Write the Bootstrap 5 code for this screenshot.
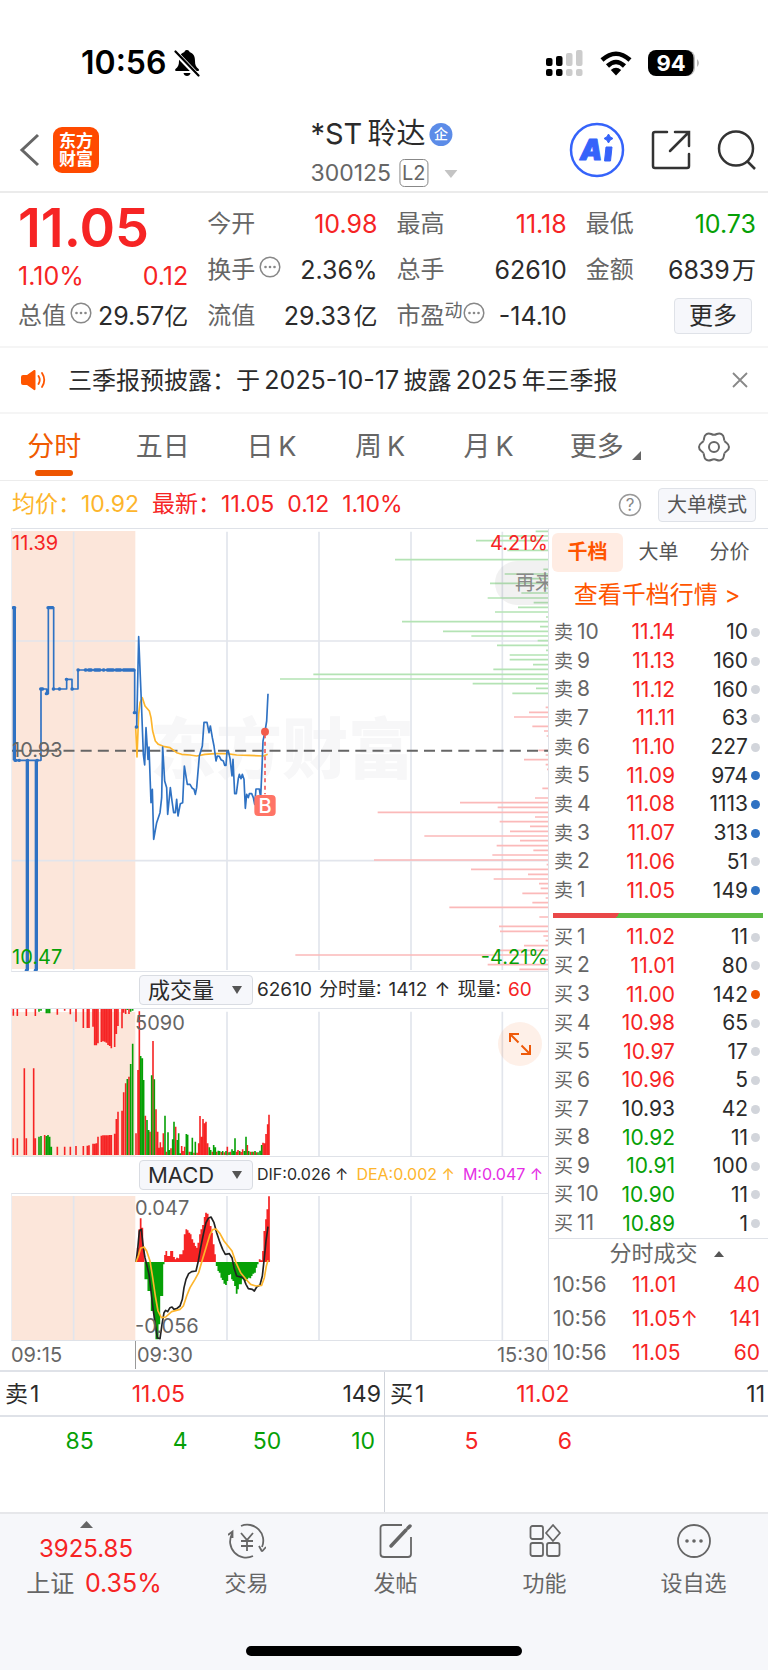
<!DOCTYPE html>
<html lang="zh-CN">
<head>
<meta charset="utf-8">
<meta name="viewport" content="width=device-width, initial-scale=1">
<title>*ST聆达 300125</title>
<link href="https://cdn.jsdelivr.net/npm/bootstrap@5.3.0/dist/css/bootstrap.min.css" rel="stylesheet">
<style>
:root{--up:#f62424;--down:#06a006;--ink:#2b2b2b;--dim:#666;--line:#dfe2e8;--brand:#f05a00;--avg:#fdb52c}
body{font-family:Inter,"Noto Sans CJK SC",sans-serif;color:var(--ink);background:#fff;font-size:24px;line-height:1.2}
svg{display:block}
.up{color:var(--up)}.down{color:var(--down)}.dim{color:var(--dim)}.avg{color:var(--avg)}
.status{padding:26px 68px 0 81px;height:100px;font-size:32px;font-weight:600;color:#000}
.nav-top{height:93px;border-bottom:2px solid #ebebeb;padding:8px 11px 0 18px}
.logo{width:46px;height:46px;border-radius:9px;background:#ff4a00;color:#fff;font-size:17px;line-height:18px;font-weight:700;text-align:center;padding-top:5px;margin-left:13px}
.title-block{padding-top:4px}
.stock-name{font-size:29px;line-height:36px;margin-bottom:7px}
.stock-code{font-size:23px;line-height:28px}
.ent{width:23px;height:23px;border-radius:50%;background:#5c8ce8;color:#fff;font-size:14px;line-height:22px;text-align:center;font-weight:500}
.lvl{border:1px solid #888;border-radius:5px;font-size:20px;line-height:26px;padding:0 2px}
.plain{border:0;background:none;padding:0;color:inherit}
.actions{gap:26px}
.quote{padding:8px 12px 7px 18px;border-bottom:2px solid #f5f5f5;display:grid;grid-template-columns:repeat(4,1fr);column-gap:19px}
.cells{display:grid;grid-template-rows:repeat(3,46px);align-items:center}
.last-price{font-size:54px;font-weight:600;line-height:54px}
.cells.first{grid-template-rows:54px 42px 38px}
.num{font-size:25px}
.soft-btn{background:#f6f7fb;border:1px solid #dfe2e8;border-radius:4px;color:var(--ink);line-height:34px;padding:0 14px}
.soft-btn.sm{font-size:20px;line-height:32px;padding:0 8px;color:#555}
.notice{height:66px;border-bottom:2px solid #f5f5f5;padding:0 20px}
.notice .msg{margin-left:22px}
.periods{height:67px;border-bottom:1px solid #ececec;font-size:27px}
.periods>*{flex:1}
.periods a{color:#666;text-decoration:none;position:relative;text-align:center}
.periods a.active{color:var(--brand)}
.periods a.active::after{content:"";position:absolute;left:50%;margin-left:-19px;width:38px;bottom:-13px;height:6px;border-radius:3px;background:#ee5500}
.summary{height:47px;font-size:23px;padding:0 12px}
.summary .figures{gap:13px}
.market{border-bottom:2px solid var(--line)}
.charts{padding-left:11px;border-right:1px solid var(--line)}
.pane{position:relative;border-top:1px solid var(--line);border-left:1px solid #eceef2;border-bottom:1px solid var(--line);overflow:hidden}
.pane svg{width:100%}
.tag{position:absolute;font-size:20px;line-height:20px}
.tag.after-open{left:123px}
.wm{position:absolute;left:138px;top:180px;font-size:66px;font-weight:900;line-height:80px;color:#f7f7f8}
.bubble{position:absolute;right:0;top:32px;width:53px;height:44px;border-radius:22px 0 0 22px;background:rgba(120,120,120,.1);color:#888;font-size:20px;line-height:44px;padding-left:20px;white-space:nowrap;overflow:hidden}
.bar-row{height:36px;padding-left:128px;font-size:19px;white-space:nowrap}
.pick{appearance:none;width:114px;height:30px;border:1px solid #d9dce2;border-radius:4px;color:var(--ink);font-size:22px;line-height:26px;padding:0 8px;background:#f6f7fb url("data:image/svg+xml,%3Csvg xmlns='http://www.w3.org/2000/svg' width='10' height='8'%3E%3Cpath d='M0 0h10L5 8z' fill='%23555'/%3E%3C/svg%3E") no-repeat right 10px center}
.macd-vals{font-size:16px}
.expand{position:absolute;right:6px;top:13px;width:44px;height:44px;border-radius:50%;background:rgba(240,90,0,.09);border:0;padding:0}
.axis{height:28px;font-size:20px;line-height:28px}
.axis .open{position:absolute;left:124px;top:0;border-left:1px solid #999;padding-left:1px}
.book{width:219px;border-top:1px solid var(--line)}
.book-tabs{font-size:20px;padding:4px 0 0 3px;height:43px}
.book-tabs a{color:#555;text-decoration:none;line-height:38px;width:71px;text-align:center}
.book-tabs a.active{background:#ffece3;color:#ff5500;font-weight:700;border-radius:6px}
.book-link{color:#ff5500;text-decoration:none;text-align:center;line-height:46px;padding-right:3px}
.levels{width:100%;font-size:21px;line-height:24px}
.levels td{padding:0}
.levels td:nth-child(1){padding-left:5px;color:var(--dim);width:60px}
.levels .cn{font-size:19px;margin-right:4px}
.levels td:nth-child(2){text-align:right;width:66px}
.levels td:nth-child(3){text-align:right}
.levels td:nth-child(4){width:20px;padding-left:3px}
.sell{height:287px}.buy{height:315px}
.dot{display:block;width:9px;height:9px;border-radius:50%;background:#d2d5db}
.dot.b{background:#2f72c3}.dot.o{background:#ee5500}
.force{height:5px;margin:8px 5px 5px 4px;background:linear-gradient(120deg,#e94848 31%,#5cbb46 31%)}
.deals-head{border-top:1px solid var(--line);font-size:22px;height:30px}
.deals{width:100%;font-size:21px}
.deals td{padding:0;height:34px}
.deals td:first-child{width:83px}
.best{display:grid;grid-template-columns:1fr 1fr}
.best>div+div{border-left:1px solid #cfd3da}
.best-line{display:grid;grid-template-columns:1fr 1fr 2fr;border-bottom:2px solid var(--line);height:45px;align-items:center;font-size:23px;padding:2px 3px 0 5px}
.queue{display:grid;grid-template-columns:repeat(4,1fr);text-align:right;font-size:23px;height:95px;padding:11px 9px 0 0}
.dock{background:#f6f7fa;border-top:2px solid #e6e7ea;height:159px;position:relative;font-size:22px}
.dock .idx{width:172px;font-size:24px;line-height:34px;padding-top:7px}
.dock .item{flex:1;color:#666;padding-top:9px}
.dock .item svg{margin:0 auto 11px}
.home{position:absolute;left:32%;right:32%;bottom:15px;height:10px;border-radius:5px;background:#000}
</style>
</head>
<body>
<header>
<div class="status d-flex align-items-center justify-content-between">
  <div class="d-flex align-items-center gap-2"><span>10:56</span>
    <svg width="26" height="28" viewBox="0 0 26 28"><path d="M13 1c-1.600-.2-2.500 1-2.500 2C6 4.500 5 8 5 12c0 4-1 6-3.500 8-.8.800-.4 2 .6 2h22c1 0 1.300-1.200.5-2C22 18 21 16 21 12c0-4-1-7.500-5.500-9 0-1-1-2-2.500-2zM9.500 24h7c-.5 4-6.500 4-7 0z"/><path d="M1 3 24 27" stroke="#fff" stroke-width="5"/><path d="M1.500 2.500 24.500 26.500" stroke="#000" stroke-width="2.200" stroke-linecap="round"/></svg>
  </div>
  <div class="d-flex align-items-center">
    <svg width="38" height="28" viewBox="0 0 38 28"><g><rect x="0" y="9" width="6.500" height="8" rx="2"/><rect x="10" y="7" width="6.500" height="10" rx="2"/><rect y="20" width="6.500" height="7" rx="2"/><rect x="10" y="20" width="6.500" height="7" rx="2"/></g><g fill="#ccc"><rect x="20" y="4" width="6.500" height="13" rx="2"/><rect x="30" y="1" width="6.500" height="16" rx="2"/><rect x="20" y="20" width="6.500" height="7" rx="2"/><rect x="30" y="20" width="6.500" height="7" rx="2"/></g></svg>
    <svg class="mx-3" width="32" height="25" viewBox="0 0 32 25"><g fill="none" stroke="#000" stroke-width="4.500"><path d="M2 9Q16-3.500 30 9"/><path d="M7.500 15Q16 7 24.500 15"/></g><path d="M16 24.500 10.800 19Q16 14.500 21.200 19z"/></svg>
    <svg width="52" height="28" viewBox="0 0 52 28"><rect x="4" y="1" width="43" height="26" rx="8" fill="#bbb"/><rect x="0" y="1" width="45.500" height="26" rx="8"/><path d="M49 10q4 4 0 8z" fill="#bbb"/><text x="23" y="22" font-size="22" font-weight="700" fill="#fff" text-anchor="middle">94</text></svg>
  </div>
</div>
<nav class="nav-top d-flex align-items-center justify-content-between position-relative">
  <div class="d-flex align-items-center">
    <button class="plain" aria-label="返回"><svg width="22" height="34" viewBox="0 0 22 34"><path d="M20 2 4 17 20 32" fill="none" stroke="#666" stroke-width="3"/></svg></button>
    <div class="logo">东方<br>财富</div>
  </div>
  <div class="title-block position-absolute start-50 translate-middle-x">
    <div class="stock-name d-flex align-items-center">*ST&thinsp;聆达<span class="ent ms-1">企</span></div>
    <div class="stock-code d-flex align-items-center dim">300125<span class="lvl ms-2">L2</span><svg class="ms-3" width="13" height="9"><path d="M0 1h13L6.500 9z" fill="#c4c4c4"/></svg></div>
  </div>
  <div class="actions d-flex align-items-center">
    <button class="plain" aria-label="AI"><svg width="56" height="56" viewBox="0 0 56 56"><circle cx="28" cy="28" r="26" fill="none" stroke="#3563fa" stroke-width="2.500"/><g fill="#3563fa" stroke="#3563fa" stroke-linejoin="round"><text x="11" y="38" font-size="28" font-weight="900" font-style="italic">A</text><path d="M37 25h6l-1.500 14h-6zM39.500 12l1.600 2.800 2.900 1.700-2.900 1.700-1.600 2.800-1.600-2.800-2.900-1.700 2.900-1.700z"/></g></svg></button>
    <button class="plain" aria-label="分享"><svg width="40" height="40" viewBox="0 0 40 40"><path d="M16 2H4Q2 2 2 4v32Q2 38 4 38h32q2 0 2-2V24M24 2h14v14M37 3 19 21" fill="none" stroke="#333" stroke-width="2.500" stroke-linecap="round"/></svg></button>
    <button class="plain" aria-label="搜索"><svg width="40" height="40" viewBox="0 0 40 40"><circle cx="19" cy="18.500" r="17" fill="none" stroke="#333" stroke-width="2.500"/><path d="m30 31 8 8" stroke="#333" stroke-width="2.500"/></svg></button>
  </div>
</nav>
</header>

<main>
<section class="quote">
  <div class="cells first">
    <div class="last-price up">11.05</div>
    <div class="d-flex justify-content-between up num"><span>1.10%</span><span>0.12</span></div>
    <div class="d-flex justify-content-between align-items-center"><span class="dim d-flex">总值<svg class="ms-1" width="22" height="22"><use href="#more-dots"/></svg></span><span><span class="num">29.57</span>亿</span></div>
  </div>
  <div class="cells">
    <div class="d-flex justify-content-between align-items-center"><span class="dim">今开</span><span class="up num">10.98</span></div>
    <div class="d-flex justify-content-between align-items-center"><span class="dim d-flex">换手<svg class="ms-1" width="22" height="22"><use href="#more-dots"/></svg></span><span class="num">2.36%</span></div>
    <div class="d-flex justify-content-between align-items-center"><span class="dim">流值</span><span><span class="num">29.33</span>&hairsp;亿</span></div>
  </div>
  <div class="cells">
    <div class="d-flex justify-content-between align-items-center"><span class="dim">最高</span><span class="up num">11.18</span></div>
    <div class="d-flex justify-content-between align-items-center"><span class="dim">总手</span><span class="num">62610</span></div>
    <div class="d-flex justify-content-between align-items-center"><span class="dim d-flex">市盈<span class="lh-1" style="font-size:18px">动</span><svg width="22" height="22"><use href="#more-dots"/></svg></span><span class="num">-14.10</span></div>
  </div>
  <div class="cells">
    <div class="d-flex justify-content-between align-items-center"><span class="dim">最低</span><span class="down num">10.73</span></div>
    <div class="d-flex justify-content-between align-items-center"><span class="dim">金额</span><span><span class="num">6839</span>&hairsp;万</span></div>
    <div class="text-end pe-1"><button class="soft-btn">更多</button></div>
  </div>
</section>

<section class="notice d-flex align-items-center">
  <svg width="26" height="22" viewBox="0 0 26 22"><path d="M3 6h4l7-5q1.500-.5 1.500 1v18q0 1.500-1.500 1l-7-5H3q-2 0-2-2V8q0-2 2-2z" fill="#ff5500"/><path d="M18.500 7q2.500 4 0 8M22 4q4.500 7 0 14" fill="none" stroke="#ff5500" stroke-width="1.800" stroke-linecap="round"/></svg>
  <span class="msg">三季报预披露：于&thinsp;<span class="num">2025-10-17</span>&thinsp;披露&thinsp;<span class="num">2025</span>&thinsp;年三季报</span>
  <button class="plain ms-auto" aria-label="关闭"><svg width="16" height="16"><path d="m1 1 14 14M15 1 1 15" stroke="#888" stroke-width="1.800"/></svg></button>
</section>

<nav class="periods d-flex align-items-center">
  <a href="#" class="active">分时</a><a href="#">五日</a><a href="#">日&thinsp;K</a><a href="#">周&thinsp;K</a><a href="#">月&thinsp;K</a>
  <a href="#" class="d-flex align-items-end justify-content-center ps-2">更多<svg class="ms-2" width="9" height="14"><path d="M9 2v9H0z" fill="#666"/></svg></a>
  <button class="plain d-flex justify-content-center" aria-label="设置"><svg width="32" height="32" viewBox="-16 -16 32 32" fill="none" stroke="#666" stroke-width="2"><g id="lobes"><path id="lobe" d="M10.600-6.100C12.100-3.500 15-4 15 0S12.100 3.500 10.600 6.100"/><use href="#lobe" transform="rotate(60)"/><use href="#lobe" transform="rotate(120)"/></g><use href="#lobes" transform="rotate(180)"/><circle r="5"/></svg></button>
</nav>

<div class="summary d-flex align-items-center">
  <div class="figures d-flex"><span class="avg">均价：10.92</span><span class="up">最新：11.05</span><span class="up">0.12</span><span class="up">1.10%</span></div>
  <button class="plain ms-auto me-3" aria-label="帮助"><svg width="24" height="24"><circle cx="12" cy="12" r="10.500" fill="none" stroke="#999" stroke-width="1.500"/><text x="12" y="18" text-anchor="middle" font-size="17" fill="#888">?</text></svg></button>
  <button class="soft-btn sm">大单模式</button>
</div>

<section class="market d-flex">
  <div class="charts flex-grow-1">
    <div class="pane">
      <div class="wm">东方财富</div>
      <svg class="position-relative" height="442" viewBox="0 0 1608 1326" preserveAspectRatio="none" fill="none">
        <rect y="6" width="370" height="1314" fill="#fce6da"/>
        <g stroke="#e2e5ec" stroke-width="5"><path d="M185 8V1323M645 8V1323M921 8V1323M1197 8V1323M1471 8V1323M0 336H1608M0 995H1608"/></g>
        <path id="asks" stroke="#b4e3b4" stroke-width="5"/>
        <path id="bids" stroke="#fbb9b9" stroke-width="5"/>
        <path d="M0 665H1608" stroke="#666" stroke-width="6" stroke-dasharray="33 18.500"/>
        <g transform="translate(-36 -24)" stroke-linejoin="round">
          <path stroke="#fdb52c" stroke-width="5" d="M407 618 411 708 416 580 420 545 427 530 435 555 448 570 453 590 458 630 466 660 475 670 490 676 510 680 530 695 545 700 570 702 590 705 615 700 645 698 680 698 710 702 745 703 790 705 803 700"/>
          <path stroke="#2f72c3" stroke-width="10" d="M43 260V718M82 718V1348M109 718V1348"/>
          <path stroke="#2f72c3" stroke-width="5" d="M43 718H123V504H140V518H145V260H161V504H200V475H216V504H234V447H404V575H410V618L416 347 424 540 430 700 434 732 438 620 444 715 447 678 453 845 457 805 461 955 470 905 480 875 485 830 488 678 494 780 500 800 503 880 511 800 516 840 521 875 526 875 530 835 534 885 541 848 548 845 553 735 562 790 570 790 577 802 582 805 586 820 590 800 598 705 607 675 612 604 621 604 627 635 631 615 637 650 642 675 648 720 652 705 658 706 663 716 670 720 674 733 678 733 681 690 685 690 690 712 696 765 699 715 704 818 709 818 715 772 718 760 723 773 727 760 732 775 736 862 740 820 745 830 748 818 755 818 760 830 764 850 768 804 778 804 782 830 786 740 789 660 795 632 800 600 804 518"/>
          <path stroke="#2f72c3" stroke-width="10" stroke-linecap="round" d="M40 260h4M45 718h3M57 718h1M82 718h1M111 718h1M122 504h6M139 518h1M144 260h14M160 504h1M178 504h1M199 475h1M216 504h1M234 447h1M256 447h2M266 447h8M284 447h16M310 447h2M322 447h18M348 447h14M370 447h32M403 575h1M409 618h1M79 1348h2M106 1348h2"/>
          <path stroke="#f25b5b" stroke-width="5" stroke-dasharray="12 10" d="M795 640V820"/>
          <circle cx="795" cy="632" r="12" fill="#f25b4b"/>
          <rect x="763" y="822" width="64" height="63" rx="12" fill="#ff7466"/>
          <text x="795" y="876" text-anchor="middle" font-size="60" font-weight="500" fill="#fff">B</text>
        </g>
      </svg>
      <div class="bubble">再来</div>
      <span class="tag up start-0 top-0 mt-1">11.39</span>
      <span class="tag up end-0 top-0 mt-1">4.21%</span>
      <span class="tag dim start-0 top-50 translate-middle-y">10.93</span>
      <span class="tag down start-0 bottom-0 mb-1">10.47</span>
      <span class="tag down end-0 bottom-0 mb-1">-4.21%</span>
    </div>
    <div class="bar-row d-flex align-items-center">
      <select class="pick me-1" aria-label="指标一"><option>成交量</option></select>
      <span>62610&hairsp; 分时量:&hairsp; 1412&hairsp; ↑&hairsp; 现量:&hairsp; <span class="up">60</span></span>
    </div>
    <div class="pane">
      <svg height="147" viewBox="0 0 1608 441" preserveAspectRatio="none" fill="none">
        <rect y="9" width="370" height="432" fill="#fce6da"/>
        <path stroke="#e2e5ec" stroke-width="5" d="M185 8V441M645 8V441M921 8V441M1197 8V441M1471 8V441"/>
        <path id="vol-up" stroke="#f62424" stroke-width="4.800"/><path id="vol-dn" stroke="#06a006" stroke-width="4.800"/>
      </svg>
      <span class="tag dim after-open top-0 mt-1">5090</span>
      <button class="expand" aria-label="放大"><svg width="44" height="44" viewBox="0 0 44 44"><path d="M12 20v-8h9M12.500 12.500l8 8M23 32h9v-9M31.500 31.500l-8-8" fill="none" stroke="#ee5a0a" stroke-width="2"/></svg></button>
    </div>
    <div class="bar-row macd-vals d-flex align-items-center">
      <select class="pick me-1" aria-label="指标二"><option>MACD</option></select>
      <span>DIF:0.026 ↑</span><span class="avg ms-2">DEA:0.002 ↑</span><span class="ms-2" style="color:#e52ee5">M:0.047 ↑</span>
    </div>
    <div class="pane">
      <svg height="146" viewBox="0 0 1608 438" preserveAspectRatio="none" fill="none">
        <rect y="6" width="370" height="432" fill="#fce6da"/>
        <path stroke="#e2e5ec" stroke-width="5" d="M185 6V438M645 6V438M921 6V438M1197 6V438M1471 6V438"/>
        <path id="macd-up" stroke="#f62424" stroke-width="5.200"/><path id="macd-dn" stroke="#06a006" stroke-width="5.200"/>
        <g transform="translate(-36 -669)" stroke-width="5" stroke-linejoin="round">
        <path stroke="#222" d="M408 873 413 835 418 780 424 775 430 830 435 860 440 880 447 910 453 960 460 1020 466 1060 472 1100 480 1103 486 1060 492 1025 497 1018 503 1022 510 1010 516 1008 522 1015 530 1013 540 1005 547 985 552 950 558 925 566 908 575 902 588 900 595 870 602 830 610 790 618 755 625 742 633 738 642 755 650 785 660 815 668 835 676 850 688 848 696 860 702 890 710 915 730 920 738 940 745 953 757 955 763 960 770 948 780 942 787 915 793 860 798 810 804 767"/>
        <path stroke="#fdb52c" d="M408 873 415 855 422 832 432 828 440 840 450 870 458 920 466 975 474 1020 484 1040 497 1038 515 1022 540 1015 550 1005 560 975 570 950 585 925 596 905 606 870 618 830 630 790 638 776 648 774 660 788 672 810 684 825 696 840 708 875 722 905 738 925 752 940 768 945 785 943 793 920 799 885 804 868"/>
        </g>
      </svg>
      <span class="tag dim after-open top-0 mt-1">0.047</span>
      <span class="tag dim after-open bottom-0 mb-1">-0.056</span>
    </div>
    <div class="axis dim position-relative d-flex justify-content-between"><span>09:15</span><span class="open">09:30</span><span>15:30</span></div>
  </div>

  <aside class="book">
    <nav class="book-tabs d-flex"><a href="#" class="active">千档</a><a href="#">大单</a><a href="#">分价</a></nav>
    <a href="#" class="book-link d-block">查看千档行情 &gt;</a>
    <table class="levels sell"><tbody id="sell"></tbody></table>
    <div class="force"></div>
    <table class="levels buy"><tbody id="buy"></tbody></table>
    <div class="deals-head dim d-flex align-items-center justify-content-center ps-3">分时成交<svg class="ms-3" width="10" height="6"><path d="M0 6h10L5 0z" fill="#555"/></svg></div>
    <table class="deals">
      <tr><td class="dim ps-1">10:56</td><td class="up">11.01</td><td class="up text-end pe-2">40</td></tr>
      <tr><td class="dim ps-1">10:56</td><td class="up">11.05↑</td><td class="up text-end pe-2">141</td></tr>
      <tr><td class="dim ps-1">10:56</td><td class="up">11.05</td><td class="up text-end pe-2">60</td></tr>
    </table>
  </aside>
</section>

<section class="best">
  <div>
    <div class="best-line"><span>卖&hairsp;1</span><span class="up text-end pe-2">11.05</span><span class="text-end">149</span></div>
    <div class="queue down"><span>85</span><span>4</span><span>50</span><span>10</span></div>
  </div>
  <div>
    <div class="best-line"><span>买&hairsp;1</span><span class="up text-end pe-2">11.02</span><span class="text-end">11</span></div>
    <div class="queue up"><span>5</span><span>6</span></div>
  </div>
</section>
</main>

<footer class="dock d-flex text-center">
  <div class="idx"><svg class="mx-auto mb-1" width="13" height="7"><path d="M0 7h13L6.500 0z" fill="#666"/></svg><div class="up">3925.85</div><div class="ps-3"><span class="dim me-1">上证</span> <span class="up num">0.35%</span></div></div>
  <button class="plain item d-flex flex-column align-items-center"><svg width="38" height="36" viewBox="0 0 38 36" fill="none" stroke="#666" stroke-width="1.800"><path d="M13 3A16 16 0 0 1 34 24M25 33A16 16 0 0 1 4 11M34 28.500 31 23M38 24l-4 4.500M0 12l4.500-3.500V15M13 10l6 7 6-7M13 18h12M13 23h12M19 17v11"/></svg>交易</button>
  <button class="plain item d-flex flex-column align-items-center"><svg width="34" height="36" viewBox="0 0 34 36" fill="none" stroke="#666" stroke-width="1.800"><path d="M23 2H5Q1.500 2 1.500 5v26q0 3 3.500 3h24q3 0 3-3V14"/><path d="M12 23 27 7" stroke-width="3.500" stroke-linecap="round"/><path d="m29 5 2-2" stroke-width="3.500" stroke-linecap="round"/></svg>发帖</button>
  <button class="plain item d-flex flex-column align-items-center"><svg width="32" height="36" viewBox="0 0 32 36" fill="none" stroke="#666" stroke-width="1.800" stroke-linejoin="round"><rect x="1.500" y="3" width="12.500" height="13" rx="2"/><rect x="1.500" y="20" width="12.500" height="13" rx="2"/><rect x="18" y="20" width="12.500" height="13" rx="2"/><path d="m24 2 7 8-7 8-7-8z"/></svg>功能</button>
  <button class="plain item d-flex flex-column align-items-center"><svg width="36" height="36" viewBox="0 0 36 36"><circle cx="18" cy="18" r="16" fill="none" stroke="#666" stroke-width="1.800"/><g fill="#666"><circle cx="11" cy="18" r="1.800"/><circle cx="18" cy="18" r="1.800"/><circle cx="25" cy="18" r="1.800"/></g></svg>设自选</button>
  <div class="home"></div>
</footer>

<svg width="0" height="0" class="position-absolute"><symbol id="more-dots" viewBox="0 0 22 22"><circle cx="11" cy="11" r="9.800" fill="none" stroke="#888" stroke-width="1.500"/><g fill="#888"><circle cx="6.500" cy="11" r="1.300"/><circle cx="11" cy="11" r="1.300"/><circle cx="15.500" cy="11" r="1.300"/></g></symbol></svg>

<script src="https://cdn.jsdelivr.net/npm/bootstrap@5.3.0/dist/js/bootstrap.bundle.min.js"></script>
<script>
// Order book: level, price, size, marker dot
const sells=[['10','11.14',10],['9','11.13',160],['8','11.12',160],['7','11.11',63],['6','11.10',227],['5','11.09',974,'b'],['4','11.08',1113,'b'],['3','11.07',313,'b'],['2','11.06',51],['1','11.05',149,'b']];
const buys=[['1','11.02',11],['2','11.01',80],['3','11.00',142,'o'],['4','10.98',65],['5','10.97',17],['6','10.96',5],['7','10.93',42],['8','10.92',11],['9','10.91',100],['10','10.90',11],['11','10.89',1]];
const tone=p=>p>10.93?'up':p<10.93?'down':'';
const rows=(side,list)=>list.map(([n,p,v,d])=>`<tr><td><span class="cn">${side}</span>${n}</td><td class="${tone(+p)}">${p}</td><td>${v}</td><td><span class="dot ${d||''}"></span></td></tr>`).join('');
document.getElementById('sell').innerHTML=rows('卖',sells);
document.getElementById('buy').innerHTML=rows('买',buys);

const draw=(id,d)=>document.getElementById(id).setAttribute('d',d);
const pairs=s=>s.trim().split(/\s+/).map(p=>p.split(':').map(Number));
// Depth profile: y level and where the bar starts, bars end at the right edge
const depth=s=>pairs(s).map(([y,x])=>`M${x+774} ${y-27}H1608`).join('');
draw('asks',depth('34:797 48:690 62:618 91:712 119:375 148:820 162:704 176:750 190:660 205:820 219:754 234:653 248:791 262:744 276:675 291:828 305:396 320:810 334:519 348:604 362:803 376:681 391:828 405:719 419:719 434:789 448:670 463:130 477:30 491:608 505:798 520:727'));
draw('bids',depth('562:827 577:777 591:732 619:787 633:822 648:830 691:805 705:827 719:762 734:827 748:831 805:817 834:795 848:570 862:683 877:323 891:795 905:689 919:780 934:720 948:463 962:750 977:680 991:790 1005:667 1020:312 1034:830 1048:603 1063:774 1077:671 1091:807 1105:812 1120:757 1134:827 1148:787 1162:538 1191:808 1219:687 1234:690 1248:820 1262:827 1277:762 1291:678 1305:76 1320:827 1334:653 1348:748'));
// Columns: x and the end that is away from the base line
const cols=(s,base,off)=>pairs(s).map(([x,y])=>`M${x-36} ${base-off}V${y-off}`).join('');
draw('vol-up',cols('40:505 52:505 73:295 79:505 101:295 106:505 134:495 172:530 194:530 211:530 228:528 250:528 262:527 267:526 279:521 284:521 289:520 294:500 304:497 309:496 314:496 319:496 324:496 329:495 334:495 344:491 349:447 354:425 366:422 371:367 377:340 387:320 408:490 414:300 418:124 436:437 450:485 459:213 468:418 473:485 477:533 481:517 486:532 490:490 499:545 513:535 527:470 545:528 549:543 554:530 568:545 582:548 591:548 596:520 600:438 605:500 609:447 614:460 618:455 623:520 637:545 650:545 664:546 673:547 682:530 691:545 710:545 714:540 723:546 728:538 742:525 751:545 760:545 769:547 789:518 794:520 798:492 803:463 807:434',555,117)
 +cols('40:137 52:138 79:138 106:138 172:134 194:122 211:133 228:155 250:174 262:174 267:174 279:170 284:226 289:226 294:220 304:216 309:214 314:215 319:218 324:225 329:228 334:235 344:231 349:192 354:168 366:175 371:128 377:132 387:132',117,117));
draw('vol-dn',cols('117:500 123:498 139:498 144:495 149:500 154:530 382:327 392:282 398:221 422:258 427:265 431:330 441:450 446:480 455:316 463:328 495:437 504:487 508:540 518:508 522:455 532:510 536:490 541:550 559:492 563:494 573:545 577:503 586:515 628:532 632:540 641:525 646:532 655:542 659:543 668:543 678:543 687:547 696:538 701:543 705:505 719:543 733:543 738:500 746:543 756:545 765:543 774:547 780:542 785:525',555,117)
 +cols('117:125 123:122 139:130 144:130 149:130 382:120 392:125 398:122',117,117));
draw('macd-up',cols('413:830 418:775 422:742 427:770 431:830 495:852 499:840 504:855 508:855 513:840 517:840 522:858 527:865 531:860 536:862 540:850 545:850 550:838 554:790 559:775 563:778 568:785 572:790 577:805 582:815 586:825 591:830 595:815 600:790 604:775 609:762 614:738 618:725 623:728 627:745 632:765 636:785 641:820 645:850 779:865 784:868 789:840 793:780 798:745 802:715 807:676',873,669));
draw('macd-dn',cols('436:925 441:925 445:960 450:960 455:1020 459:1020 464:1060 469:1105 473:1105 478:1060 482:975 487:975 491:880 650:885 655:900 659:905 664:920 668:927 673:938 678:942 682:930 687:912 691:910 696:925 700:930 705:945 710:968 714:955 719:940 723:940 728:925 733:925 737:930 742:925 746:920 751:922 755:915 760:908 765:905 769:890 773:880',873,669));
</script>
</body>
</html>
